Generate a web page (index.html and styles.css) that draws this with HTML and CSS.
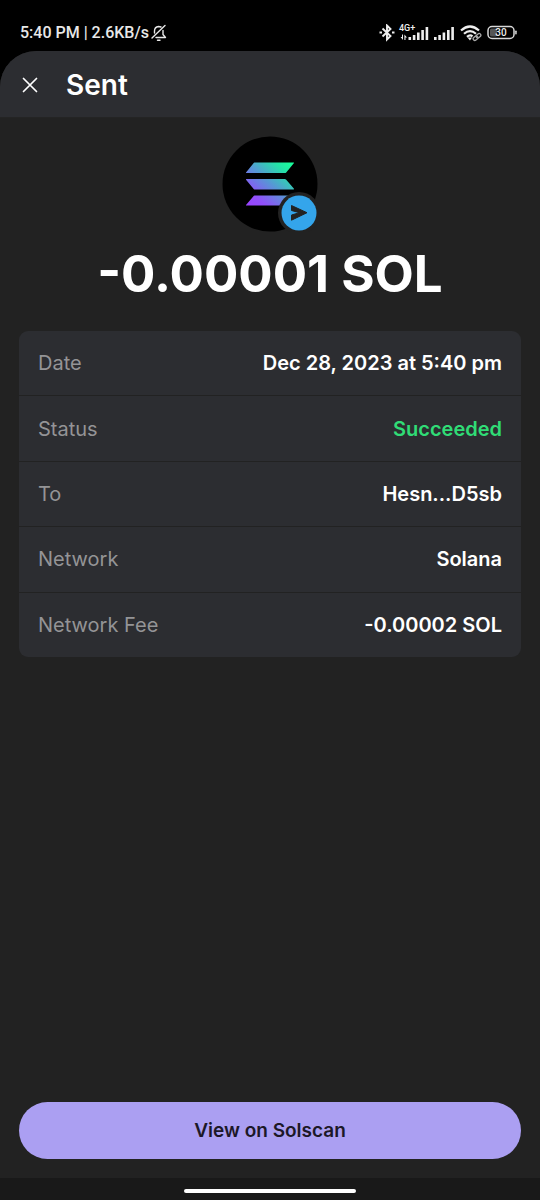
FILE: index.html
```html
<!DOCTYPE html>
<html lang="en">
<head>
<meta charset="utf-8">
<meta name="viewport" content="width=device-width, initial-scale=1">
<title>Sent</title>
<link rel="stylesheet" href="styles.css">
</head>
<body>
<div class="status-bar">
  <div class="status-left">
    <span>5:40 PM | 2.6KB/s</span>
    <svg width="16" height="18" viewBox="0 0 16 18" fill="none" stroke="#e8e8e8" stroke-width="1.400" stroke-linecap="round" stroke-linejoin="round" aria-hidden="true">
      <path d="M14 1.500L1 14M3.500 9V7Q3.500 3 7.500 2.500Q9 2.500 10 3M12 6.500V10.500L14.500 13.500H5M6.500 16.200H9"/>
    </svg>
  </div>
  <div class="status-right">
    <svg width="16" height="18" viewBox="0 0 16 18" fill="none" stroke="#eee" stroke-width="1.900" aria-hidden="true">
      <path d="M3.500 4.500L11.500 12L8 15.500V1.500L11.500 5L3.500 12.500"/>
      <path d="M.5 8.500H3M13 8.500H15.500" stroke-width="2.200"/>
    </svg>
    <svg class="mobile" width="29" height="18" viewBox="0 0 29 18" fill="#eee" aria-hidden="true">
      <text class="net-label" x="-1" y="7">4G+</text>
      <path d="M3 10.500V16L.6 13H2V10.500ZM4.400 16V10.500L7 13.500H5.500V16ZM8.500 13h2.600v3H8.500zM12.800 11h2.600v5h-2.600zM17 8.500h2.600v7.500h-2.600zM21.300 6h2.600v10h-2.600zM25.600 3h2.600v13h-2.600z"/>
    </svg>
    <svg width="21" height="18" viewBox="0 0 21 18" fill="#eee" aria-hidden="true">
      <path d="M0 13h2.600v3H0zM4.300 11h2.600v5H4.300zM8.600 8.500h2.600v7.500H8.600zM13 6h2.600v10H13zM17.300 3h2.600v13h-2.600z"/>
    </svg>
    <svg width="22" height="18" viewBox="0 0 22 18" fill="none" stroke="#eee" stroke-width="2.200" aria-hidden="true">
      <path d="M1 6.500Q10 -1.500 19 6.500M4 9.800Q10 4.500 16 9.800M7 12.800Q10 10.200 12.500 12.300"/>
      <path d="M7.500 13.500H12L10 16.500Z" fill="#eee" stroke="none"/>
      <g stroke="#aaa" stroke-width="1.300"><rect x="13" y="12.500" width="5" height="3.400" rx="1.700" transform="rotate(-40 15.500 14.200)"/><rect x="16" y="10" width="5" height="3.400" rx="1.700" transform="rotate(-40 18.500 11.700)"/></g>
    </svg>
    <svg width="30" height="18" viewBox="0 0 30 18" aria-hidden="true">
      <rect x="1" y="2.500" width="26" height="12" rx="4" fill="none" stroke="#d8d8d8" stroke-width="1.500"/>
      <rect x="3" y="4.500" width="7" height="8" rx="1.500" fill="#555"/>
      <rect x="28.200" y="6.500" width="1.500" height="4" rx=".7" fill="#ddd"/>
      <text class="battery-label" x="14" y="12" text-anchor="middle">30</text>
    </svg>
  </div>
</div>
<div class="sheet">
  <header class="header">
    <button class="close" type="button" aria-label="Close">
      <svg width="16" height="16" viewBox="0 0 16 16" fill="none" stroke="#fff" stroke-width="1.700" stroke-linecap="round" aria-hidden="true"><path d="M1.500 1.500L14.500 14.500M14.500 1.500L1.500 14.500"/></svg>
    </button>
    <h1 class="title">Sent</h1>
  </header>
  <main class="content">
    <div class="token">
      <svg width="96" height="96" viewBox="0 0 96 96" role="img" aria-label="Solana, sent">
        <defs>
          <linearGradient id="sol" gradientUnits="userSpaceOnUse" x1="29" y1="70" x2="66" y2="26">
            <stop offset="0" stop-color="#9945ff"/><stop offset=".18" stop-color="#9050fa"/><stop offset=".52" stop-color="#5797d5"/><stop offset=".85" stop-color="#23e3a6"/><stop offset="1" stop-color="#19fb9b"/>
          </linearGradient>
        </defs>
        <circle cx="48" cy="48" r="47.500" fill="#000"/>
        <path fill="url(#sol)" d="M32.500 26.500H71.500Q72.500 26.500 71.800 27.300L64 36.700Q63.500 37 62.800 37H24.500Q23.500 37 24.200 36.200L31.900 26.800ZM24.500 43H62.800Q63.500 43 64 43.500L71.800 52.400Q72.500 53.500 71.500 53.500H32.500L31.900 53.200L24.200 44Q23.500 43 24.500 43ZM32.500 59.500H71.500L64 69.200Q63.500 69.500 62.800 69.500H24.500Q23.500 69.500 24.200 68.700L31.900 59.800Z"/>
        <circle cx="77" cy="77" r="21" fill="#222"/>
        <circle cx="77" cy="77" r="17.500" fill="#34a5eb"/>
        <path d="M69.500 69.500L85 76.700L69.500 84.200V79L77.500 76.700L69.500 74.500Z" fill="#222" stroke="#222" stroke-linejoin="round"/>
      </svg>
    </div>
    <p class="amount">-0.00001 SOL</p>
    <dl class="details">
      <div class="row"><dt>Date</dt><dd>Dec 28, 2023 at 5:40 pm</dd></div>
      <div class="row"><dt>Status</dt><dd class="success">Succeeded</dd></div>
      <div class="row"><dt>To</dt><dd>Hesn...D5sb</dd></div>
      <div class="row"><dt>Network</dt><dd>Solana</dd></div>
      <div class="row"><dt>Network Fee</dt><dd>-0.00002 SOL</dd></div>
    </dl>
    <button class="explorer" type="button">View on Solscan</button>
  </main>
</div>
<div class="nav-bar"><div class="handle"></div></div>
</body>
</html>
```
FILE: styles.css
```css
* {
  box-sizing: border-box;
}

body {
  margin: 0;
  min-height: 100vh;
  display: flex;
  flex-direction: column;
  background: #000;
  color: #fff;
  font-family: Inter, "Liberation Sans", sans-serif;
}

.status-bar {
  display: flex;
  justify-content: space-between;
  align-items: center;
  padding: 14px 23px 0 20px;
  height: 51px;
  font: 500 16px/20px Roboto, sans-serif;
  color: #e8e8e8;
}

.status-left,
.status-right {
  display: flex;
  align-items: center;
}

.status-left {
  gap: 2px;
}

.status-right {
  gap: 5px;
}

.mobile {
  overflow: visible;
}

.net-label {
  font: 500 9px Roboto, sans-serif;
}

.battery-label {
  font: 500 10px Roboto, sans-serif;
  fill: #eee;
}

.sheet {
  flex: 1;
  display: flex;
  flex-direction: column;
  background: #222;
  border-radius: 36px 36px 0 0;
  overflow: hidden;
}

.header {
  display: flex;
  align-items: center;
  gap: 21px;
  padding: 16px 15px 14px;
  background: #2c2d31;
  border-bottom: 1px solid #242424;
}

.close {
  display: grid;
  place-items: center;
  width: 30px;
  height: 30px;
  padding: 0;
  border: 0;
  background: none;
}

.title {
  margin: 0;
  font-size: 28px;
  line-height: 36px;
  font-weight: 600;
}

.content {
  flex: 1;
  display: flex;
  flex-direction: column;
  padding: 18px 19px 19px;
}

.token {
  display: flex;
  justify-content: center;
}

.amount {
  margin: 12px 0 27px;
  font-size: 51px;
  line-height: 60px;
  font-weight: 700;
  text-align: center;
}

.details {
  display: grid;
  grid-auto-rows: 1fr;
  gap: 1px;
  min-height: 326px;
  margin: 0;
  border-radius: 9px;
  overflow: hidden;
}

.row {
  display: flex;
  justify-content: space-between;
  align-items: center;
  padding: 0 19px;
  background: #2c2d31;
  font-size: 20px;
  line-height: 26px;
}

dt {
  color: #949496;
}

dd {
  margin: 0;
  font-weight: 600;
}

.success {
  color: #30dc76;
}

.explorer {
  margin-top: auto;
  padding: 15px;
  border: 0;
  border-radius: 29px;
  background: #ab9ff2;
  color: #1c1828;
  font: 600 19px/27px Inter, sans-serif;
}

.nav-bar {
  display: flex;
  justify-content: center;
  padding: 11px 0 7px;
  background: #191919;
}

.handle {
  width: 172px;
  height: 4px;
  border-radius: 2px;
  background: #fff;
}
```
